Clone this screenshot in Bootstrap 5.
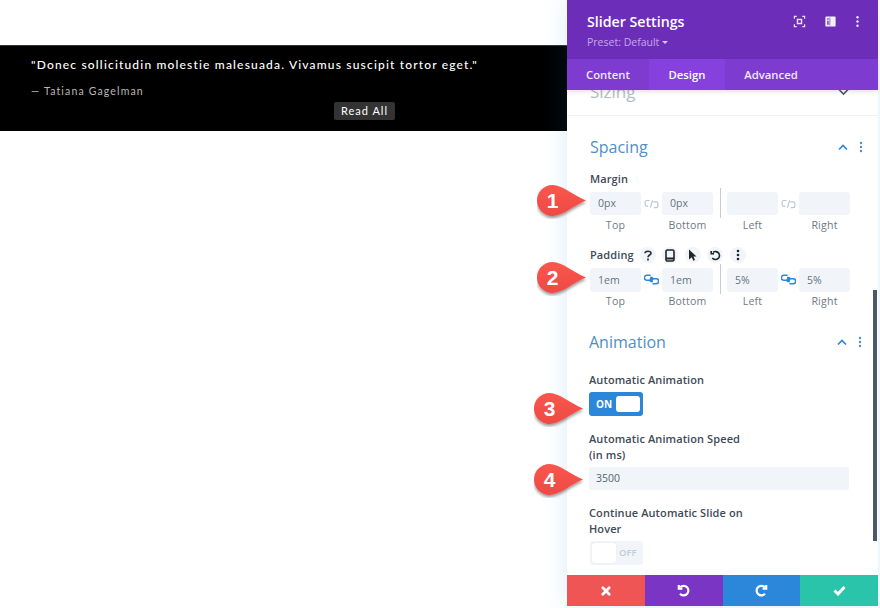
<!DOCTYPE html>
<html lang="en">
<head>
<meta charset="utf-8">
<title>Slider Settings</title>
<link href="https://cdn.jsdelivr.net/npm/bootstrap@5.3.0/dist/css/bootstrap.min.css" rel="stylesheet">
<style>
html,body{height:608px;overflow:hidden;background:#fff}
body{font-family:"Open Sans","Liberation Sans",sans-serif;color:#4c5866}
.stage{height:608px}
.page-side{width:567px;flex:none;padding-top:45px}
.hero{height:86px;background:#000;border-top:1px solid #333;padding:11px 0 0 31px;font-family:Lato,"Liberation Sans",sans-serif;position:relative}
.quote{font-size:12px;line-height:16px;color:#fff;letter-spacing:1.17px;font-weight:500;margin:0}
.author{font-size:10.5px;line-height:14px;color:#b8b8b8;letter-spacing:1.15px;margin:11px 0 0}
.read-btn{display:block;width:61px;height:18px;margin:4px 0 0 303px;padding:0;border:0;background:#333;color:#fff;font-size:11px;line-height:18px;letter-spacing:1px;border-radius:2px}
.read-btn:hover{background:#333;color:#fff}
.panel{width:311px;height:606px;flex:none;background:#fff;box-shadow:0 0 24px rgba(43,135,218,.16);position:relative}
.head{height:59px;background:#6c2eb9;padding:13px 0 0 20px;position:relative;z-index:2}
.head-title{font-size:14.2px;line-height:18px;font-weight:600;color:#fff;margin:0}
.head-preset{font-size:10.5px;line-height:14px;color:#c7a6ee;margin-top:4px}
.caret{display:inline-block;border-style:solid;border-width:3px 3px 0;border-color:#d8c4f2 transparent transparent;vertical-align:2px;margin-left:3px}
.head-tools{position:absolute;top:15px;left:226px}
.head-tool{position:absolute;top:0;width:13px;height:13px;display:block}
.tabs{height:31px;background:#7d3bcf;position:relative;z-index:2;box-shadow:0 2px 4px rgba(50,20,90,.12)}
.tab-item{height:31px;line-height:31px;font-size:11.3px;font-weight:600;color:#f1e8fb;padding:0;text-align:center}
.tab-item:hover{color:#f1e8fb}
.tab-a{width:82px}
.tab-b{width:76px;background:#8540de;color:#fff}
.tab-c{width:92px}
.body-scroll{position:relative;height:485px}
.sizing{margin-top:-12px;height:38px;border-bottom:1px solid #f0f3f6;padding:0 29px 0 23px;font-size:17px;line-height:28px;color:#b3bcc6}
.sec{padding:0 0 0 23px}
.sec-head{height:22px;line-height:22px;font-size:16px;color:#4f8fc4;padding-right:15px}
.sec-spacing{margin-top:20px}
.anim{padding-left:22px}
.anim .sec-head{padding-right:16px}
.sec-anim{margin-top:22px}
.sec-tools{gap:11px}
.lbl{font-size:11px;line-height:16px;font-weight:550;letter-spacing:.1px;color:#3f4a57;margin:0}
.lbl-margin{margin-top:13px}
.field-row{position:relative;margin-top:5px}
.field-row.tight{margin-top:3px}
.fcol{width:51px;flex:none}
.finput{height:23px;width:51px;background:#f1f5f9;border:0;border-radius:3px;padding:0 8px;font-size:10.5px;line-height:23px;color:#66727f;box-shadow:none}
.finput:focus{background:#f1f5f9;box-shadow:none;color:#66727f}
.tight .finput{height:24px}
.sub{font-size:10.6px;line-height:16px;color:#6f7a86;text-align:center;margin-top:2px;letter-spacing:.2px}
.tight .sub{margin-top:1px}
.linkc{width:21px;height:23px;flex:none}
.sep{width:14px;flex:none;height:30px;margin-top:-4px;position:relative}
.sep:after{content:"";position:absolute;left:7px;top:0;bottom:0;width:1px;background:#c6ccd2}
.pad-row{margin-top:12px;height:20px}
.tool-dots{gap:6.5px;margin-left:6px}
.mini{width:16px;height:16px;border-radius:50%;background:#f1f5f9}
.lbl-auto{margin-top:19px}
.tog{width:54px;height:24px;border-radius:3px;margin-top:4px;font-size:10px;font-weight:700;position:relative}
.tog-on{background:#2b87da;color:#fff;padding-left:7px;line-height:24px}
.tog-knob{position:absolute;top:4px;width:24px;height:16px;background:#fff;border-radius:3px}
.tog-on .tog-knob{left:27px}
.tog-off{background:#f1f5f9;color:#c2ccd6;padding-left:29px;line-height:24px;width:53px;margin-left:1px;font-size:9.5px;font-weight:600}
.tog-off .tog-knob{left:2px;top:2px;height:20px;box-shadow:0 0 2px rgba(0,0,0,.05)}
.lbl-speed{margin-top:15px}
.wide-row{position:relative;margin-top:4px;width:260px}
.wide{width:260px;height:23px;background:#f1f5f9;border:0;border-radius:2px;padding:0 7px;font-size:10.5px;color:#56626f;line-height:23px;box-shadow:none}
.wide:focus{background:#f1f5f9;box-shadow:none;color:#56626f}
.narrow{width:170px}
.scroll-thumb{position:absolute;left:306px;top:200px;width:4px;height:251px;background:#4c5866}
.foot{height:31px;position:relative}
.foot .btn{flex:1 1 0;border:0;border-radius:0;padding:0;height:31px;display:flex;align-items:center;justify-content:center}
.f-red,.f-red:hover{background:#ef5555}
.f-pur,.f-pur:hover{background:#7a35c4}
.f-blu,.f-blu:hover{background:#2b87da}
.f-grn,.f-grn:hover{background:#29c4a9}
.pin{position:absolute;width:52px;height:38px;z-index:5}
.pin svg{position:absolute;left:0;top:0;overflow:visible}
.pin-num{position:absolute;left:0;top:0;width:31px;height:31px;text-align:center;line-height:31px;font-family:"Liberation Sans",sans-serif;font-weight:700;font-size:21px;color:#fff}
.pin-a{left:-53px;top:-7px}
.pin-b{left:-53px;top:-6px}
.pin-c{left:-55px;top:1px}
.pin-d{left:-55px;top:-3px}
</style>
</head>
<body>
<svg width="0" height="0" class="position-absolute">
<defs>
<filter id="pinshadow" x="-20%" y="-20%" width="150%" height="160%"><feDropShadow dx="0" dy="2" stdDeviation="1.600" flood-color="#000" flood-opacity=".42"/></filter>
<linearGradient id="pingrad" x1="0" y1="0" x2="0" y2="1"><stop offset="0" stop-color="#f9564e"/><stop offset="1" stop-color="#ee4a44"/></linearGradient>
<symbol id="pinshape" viewBox="0 0 50 34"><path d="M15.500 0C25 0 37 10.500 49 15.500C37 20.500 25 31 15.500 31C7 31 0 24 0 15.500C0 7 7 0 15.500 0Z" fill="url(#pingrad)" filter="url(#pinshadow)"/></symbol>
<symbol id="brk" viewBox="0 0 16 10"><path d="M6 1.200H3A1.800 1.800 0 0 0 1.200 3V5.500A1.800 1.800 0 0 0 3 7.300H4.500M9.200 1 6.800 9M10 2.700H13A1.800 1.800 0 0 1 14.800 4.500V7A1.800 1.800 0 0 1 13 8.800H10.500" fill="none" stroke="#bcc4cc" stroke-width="1.200"/></symbol>
<symbol id="lnk" viewBox="0 0 16 11"><path d="M7 1H3A2.200 2.200 0 0 0 3 6.300H8A1.500 1.500 0 0 0 8 3.300H6.500M9 10H13A2.200 2.200 0 0 0 13 4.700H8A1.500 1.500 0 0 0 8 7.700H9.500" fill="none" stroke="#2b87da" stroke-width="1.700"/></symbol>
</defs>
</svg>
<div class="stage d-flex">
  <div class="page-side">
    <section class="hero">
      <p class="quote">"Donec sollicitudin molestie malesuada. Vivamus suscipit tortor eget."</p>
      <p class="author">— Tatiana Gagelman</p>
      <a class="btn read-btn" href="#">Read All</a>
    </section>
  </div>
  <aside class="panel d-flex flex-column">
    <header class="head">
      <h1 class="head-title">Slider Settings</h1>
      <div class="head-preset">Preset: Default<span class="caret"></span></div>
      <div class="head-tools">
        <svg class="head-tool" style="left:0" viewBox="0 0 14 14" fill="none" stroke="#eee4fa" stroke-width="1.300"><path d="M1.500 4V1.500H4M10 1.500H12.500V4M12.500 10V12.500H10M4 12.500H1.500V10"/><rect x="4.800" y="4.800" width="4.400" height="4.400" fill="none" stroke-width="1.500"/></svg>
        <svg class="head-tool" style="left:31px" viewBox="0 0 14 14"><path fill="#f5effc" fill-rule="evenodd" d="M2.500 1.500H11.500A1 1 0 0 1 12.500 2.500V11.500A1 1 0 0 1 11.500 12.500H2.500A1 1 0 0 1 1.500 11.500V2.500A1 1 0 0 1 2.500 1.500ZM3.500 3.500V5H5V3.500ZM3.500 6.200V10.500H5V6.200ZM6 2.800V11.200H6.700V2.800Z"/></svg>
        <svg class="head-tool" style="left:58px" viewBox="0 0 14 14" fill="#eee4fa"><circle cx="7" cy="2.500" r="1.300"/><circle cx="7" cy="7" r="1.300"/><circle cx="7" cy="11.500" r="1.300"/></svg>
      </div>
    </header>
    <nav class="tabs nav">
      <a class="nav-link tab-item tab-a" href="#">Content</a>
      <a class="nav-link tab-item tab-b" href="#">Design</a>
      <a class="nav-link tab-item tab-c" href="#">Advanced</a>
    </nav>
    <div class="body-scroll">
      <div class="sizing d-flex justify-content-between align-items-start">
        <span>Sizing</span>
        <svg class="mt-2" width="11" height="13" viewBox="0 0 11 13" fill="none" stroke="#4c5866" stroke-width="1.600"><path d="M1 3.500 5.500 8 10 3.500"/></svg>
      </div>
      <div class="sec">
        <div class="sec-head sec-spacing d-flex justify-content-between align-items-center">
          <span>Spacing</span>
          <span class="d-flex align-items-center sec-tools">
            <svg width="10" height="8" viewBox="0 0 10 8" fill="none" stroke="#2b87da" stroke-width="1.700"><path d="M1 6.500 5 2.500 9 6.500"/></svg>
            <svg width="4" height="12" viewBox="0 0 4 12" fill="#4f8fc4"><circle cx="2" cy="2" r="1.200"/><circle cx="2" cy="6" r="1.200"/><circle cx="2" cy="10" r="1.200"/></svg>
          </span>
        </div>
        <p class="lbl lbl-margin">Margin</p>
        <div class="field-row d-flex">
          <div class="pin pin-a"><svg width="50" height="34"><use href="#pinshape"/></svg><span class="pin-num">1</span></div>
          <div class="fcol"><input class="form-control finput" value="0px"><div class="sub">Top</div></div>
          <div class="linkc d-flex align-items-center justify-content-center"><svg width="15" height="10"><use href="#brk"/></svg></div>
          <div class="fcol"><input class="form-control finput" value="0px"><div class="sub">Bottom</div></div>
          <div class="sep"></div>
          <div class="fcol"><input class="form-control finput" value=""><div class="sub">Left</div></div>
          <div class="linkc d-flex align-items-center justify-content-center"><svg width="15" height="10"><use href="#brk"/></svg></div>
          <div class="fcol"><input class="form-control finput" value=""><div class="sub">Right</div></div>
        </div>
        <div class="pad-row d-flex align-items-center">
          <span class="lbl">Padding</span>
          <span class="d-flex tool-dots">
            <span class="mini d-flex align-items-center justify-content-center"><svg width="8" height="11" viewBox="0 0 8 11" fill="none" stroke="#2a2f36" stroke-width="1.700"><path d="M1 3.200C1 .6 7 .6 7 3.200C7 5 4 5 4 7.300"/><path d="M4 8.600V10.600"/></svg></span>
            <span class="mini d-flex align-items-center justify-content-center"><svg width="10" height="13" viewBox="0 0 10 13" fill="none" stroke="#20252b" stroke-width="1.600"><rect x="1" y="1" width="8" height="11" rx="1.400"/><path d="M1 9.500H9" stroke-width="2"/></svg></span>
            <span class="mini d-flex align-items-center justify-content-center"><svg width="9" height="12" viewBox="0 0 9 12"><path fill="#20252b" d="M1 .5 8.500 7.500H5.500L7 11 5.300 11.800 3.800 8.200 1 10.500Z"/></svg></span>
            <span class="mini d-flex align-items-center justify-content-center"><svg width="11" height="11" viewBox="0 0 11 11" fill="none" stroke="#20252b" stroke-width="1.600"><path d="M3 2.400A4 4 0 1 1 2.300 8"/><path d="M1.200 1V3.800H4" /></svg></span>
            <span class="mini d-flex align-items-center justify-content-center"><svg width="4" height="12" viewBox="0 0 4 12" fill="#20252b"><circle cx="2" cy="2" r="1.300"/><circle cx="2" cy="6" r="1.300"/><circle cx="2" cy="10" r="1.300"/></svg></span>
          </span>
        </div>
        <div class="field-row tight d-flex">
          <div class="pin pin-b"><svg width="50" height="34"><use href="#pinshape"/></svg><span class="pin-num">2</span></div>
          <div class="fcol"><input class="form-control finput" value="1em"><div class="sub">Top</div></div>
          <div class="linkc d-flex align-items-center justify-content-center"><svg width="15" height="11"><use href="#lnk"/></svg></div>
          <div class="fcol"><input class="form-control finput" value="1em"><div class="sub">Bottom</div></div>
          <div class="sep"></div>
          <div class="fcol"><input class="form-control finput" value="5%"><div class="sub">Left</div></div>
          <div class="linkc d-flex align-items-center justify-content-center"><svg width="15" height="11"><use href="#lnk"/></svg></div>
          <div class="fcol"><input class="form-control finput" value="5%"><div class="sub">Right</div></div>
        </div>
      </div>
      <div class="sec anim">
        <div class="sec-head sec-anim d-flex justify-content-between align-items-center">
          <span>Animation</span>
          <span class="d-flex align-items-center sec-tools">
            <svg width="10" height="8" viewBox="0 0 10 8" fill="none" stroke="#2b87da" stroke-width="1.700"><path d="M1 6.500 5 2.500 9 6.500"/></svg>
            <svg width="4" height="12" viewBox="0 0 4 12" fill="#4f8fc4"><circle cx="2" cy="2" r="1.200"/><circle cx="2" cy="6" r="1.200"/><circle cx="2" cy="10" r="1.200"/></svg>
          </span>
        </div>
        <p class="lbl lbl-auto">Automatic Animation</p>
        <div class="wide-row">
          <div class="pin pin-c" ><svg width="50" height="34"><use href="#pinshape"/></svg><span class="pin-num">3</span></div>
          <div class="tog tog-on">ON<span class="tog-knob"></span></div>
        </div>
        <p class="lbl lbl-speed narrow">Automatic Animation Speed<br>(in ms)</p>
        <div class="wide-row">
          <div class="pin pin-d"><svg width="50" height="34"><use href="#pinshape"/></svg><span class="pin-num">4</span></div>
          <input class="form-control wide" value="3500">
        </div>
        <p class="lbl lbl-speed narrow">Continue Automatic Slide on Hover</p>
        <div class="wide-row">
          <div class="tog tog-off">OFF<span class="tog-knob"></span></div>
        </div>
      </div>
      <div class="scroll-thumb"></div>
    </div>
    <footer class="foot d-flex">
      <button class="btn f-red" aria-label="Close"><svg width="10" height="10" viewBox="0 0 11 11" stroke="#fff" stroke-width="3" stroke-linecap="round"><path d="M2 2 9 9M9 2 2 9"/></svg></button>
      <button class="btn f-pur" aria-label="Undo"><svg width="13" height="13" viewBox="0 0 13 13" fill="none" stroke="#fff" stroke-width="2.200"><path d="M3.200 3.200A4.800 4.800 0 1 1 3 9.800"/><path d="M1.800 1V4.600H5.400"/></svg></button>
      <button class="btn f-blu" aria-label="Redo"><svg width="13" height="13" viewBox="0 0 13 13" fill="none" stroke="#fff" stroke-width="2.200"><path d="M9.800 3.200A4.800 4.800 0 1 0 10 9.800"/><path d="M11.200 1V4.600H7.600"/></svg></button>
      <button class="btn f-grn" aria-label="Save"><svg width="13" height="11" viewBox="0 0 13 11" fill="none" stroke="#fff" stroke-width="3"><path d="M1.500 5.500 5 9 11.500 2"/></svg></button>
    </footer>
  </aside>
</div>
</body>
</html>
